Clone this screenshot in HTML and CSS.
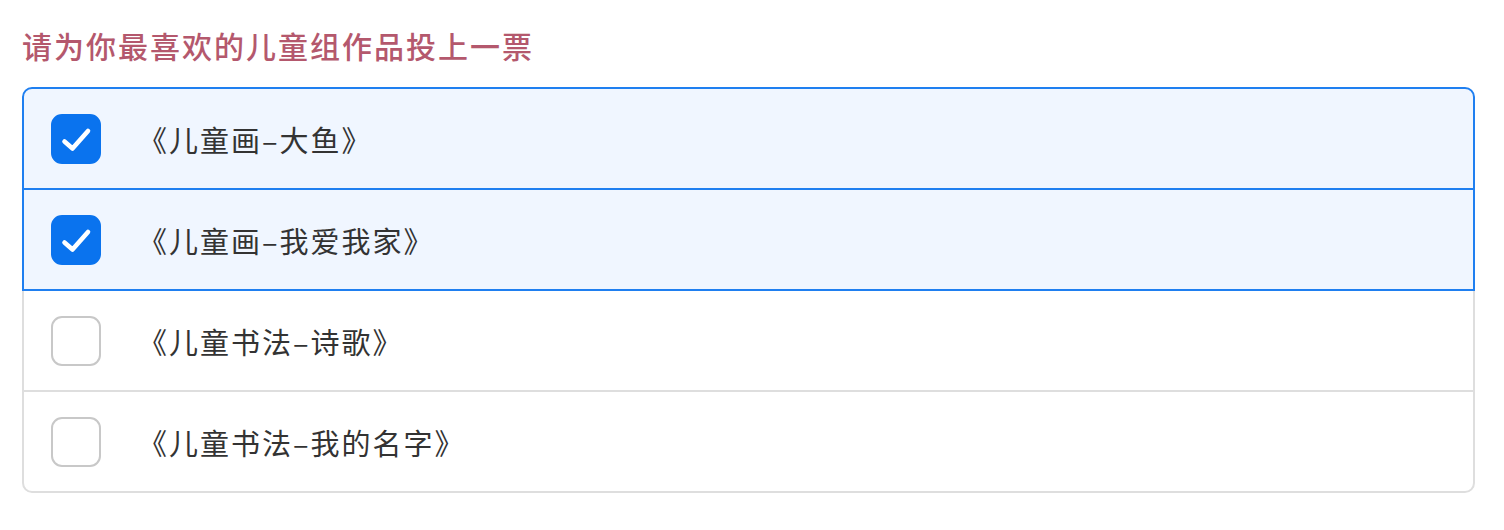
FILE: index.html
```html
<!DOCTYPE html>
<html lang="zh-CN">
<head>
<meta charset="utf-8">
<link rel="stylesheet" href="styles.css">
</head>
<body>
<div class="page">
  <h1 class="title">请为你最喜欢的儿童组作品投上一票</h1>
  <div class="list">
    <label class="row selected first">
      <span class="box checked"><svg viewBox="0 0 50 50" width="50" height="50"><path d="M13.5 27.5 L21.5 34.5 L37 17" fill="none" stroke="#fff" stroke-width="4.6" stroke-linecap="round" stroke-linejoin="round"/></svg></span>
      <span class="label">《儿童画–大鱼》</span>
    </label>
    <label class="row selected">
      <span class="box checked"><svg viewBox="0 0 50 50" width="50" height="50"><path d="M13.5 27.5 L21.5 34.5 L37 17" fill="none" stroke="#fff" stroke-width="4.6" stroke-linecap="round" stroke-linejoin="round"/></svg></span>
      <span class="label">《儿童画–我爱我家》</span>
    </label>
    <label class="row">
      <span class="box"></span>
      <span class="label">《儿童书法–诗歌》</span>
    </label>
    <label class="row last">
      <span class="box"></span>
      <span class="label">《儿童书法–我的名字》</span>
    </label>
  </div>
</div>
</body>
</html>
```
FILE: styles.css
```css
html, body {
  margin: 0;
  padding: 0;
  background: #ffffff;
}
.page {
  padding: 22px 29px 0 22px;
  font-family: "Noto Sans CJK SC", "Noto Sans", sans-serif;
}
.title {
  margin: 0 0 19px 0;
  font-size: 30px;
  line-height: 46px;
  font-weight: 500;
  color: #b4586d;
  letter-spacing: 2px;
}
.list {
  display: flex;
  flex-direction: column;
}
.row {
  display: flex;
  align-items: center;
  height: 99px;
  padding-left: 27px;
  border: 2px solid #dedede;
  margin-top: -2px;
  background: #ffffff;
  position: relative;
}
.row.first {
  margin-top: 0;
  border-radius: 10px 10px 0 0;
}
.row.last {
  border-radius: 0 0 10px 10px;
}
.row.selected {
  border-color: #1f7ff0;
  background: #f0f6ff;
  z-index: 1;
}
.box {
  width: 46px;
  height: 46px;
  border: 2px solid #c8c8c8;
  border-radius: 11px;
  background: #ffffff;
  flex: none;
  display: flex;
  align-items: center;
  justify-content: center;
  overflow: hidden;
}
.box.checked {
  background: #0a73ee;
  border-color: #0a73ee;
}
.box svg {
  display: block;
  flex: none;
}
.label {
  margin-left: 37px;
  font-size: 29px;
  color: #333333;
  letter-spacing: 2px;
}
```
